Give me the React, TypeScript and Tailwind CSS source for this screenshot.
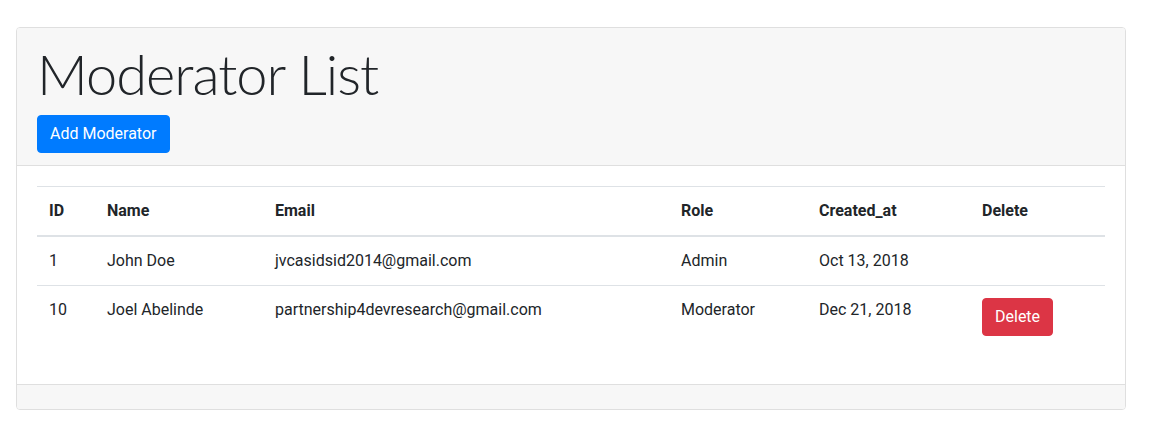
import React from "react";

type Moderator = {
  id: number;
  name: string;
  email: string;
  role: string;
  createdAt: string;
  deletable: boolean;
};

const moderators: Moderator[] = [
  { id: 1, name: "John Doe", email: "jvcasidsid2014@gmail.com", role: "Admin", createdAt: "Oct 13, 2018", deletable: false },
  { id: 10, name: "Joel Abelinde", email: "partnership4devresearch@gmail.com", role: "Moderator", createdAt: "Dec 21, 2018", deletable: true },
];

const columns = [
  { label: "ID", w: "w-[58px]" },
  { label: "Name", w: "w-[168px]" },
  { label: "Email", w: "w-[406px]" },
  { label: "Role", w: "w-[138px]" },
  { label: "Created_at", w: "w-[163px]" },
  { label: "Delete", w: "w-[135px]" },
];

export default function App() {
  return (
    <div className="min-h-[437px] bg-white pt-[27px] pl-4 font-['Roboto',sans-serif] text-[#212529]">
      <div className="w-[1110px] rounded border border-[#dfdfdf] overflow-hidden">
        {/* header */}
        <div className="bg-[#f7f7f7] border-b border-[#dfdfdf] px-5 py-3">
          <h1 className="font-['Lato',sans-serif] font-light text-[56px] leading-[1.2] tracking-[-1px] mb-2">
            Moderator List
          </h1>
          <button className="bg-[#007bff] text-white text-base leading-6 px-3 py-[6px] rounded border border-[#007bff]">
            Add Moderator
          </button>
        </div>

        {/* body */}
        <div className="p-5">
          <table className="w-full border-collapse mb-4 text-base leading-6 table-fixed">
            <thead>
              <tr>
                {columns.map((c) => (
                  <th
                    key={c.label}
                    className={`${c.w} text-left font-bold p-3 border-t border-b-2 border-[#dee2e6]`}
                  >
                    {c.label}
                  </th>
                ))}
              </tr>
            </thead>
            <tbody>
              {moderators.map((m) => (
                <tr key={m.id}>
                  <td className="p-3 align-top border-t border-[#dee2e6]">{m.id}</td>
                  <td className="p-3 align-top border-t border-[#dee2e6]">{m.name}</td>
                  <td className="p-3 align-top border-t border-[#dee2e6]">{m.email}</td>
                  <td className="p-3 align-top border-t border-[#dee2e6]">{m.role}</td>
                  <td className="p-3 align-top border-t border-[#dee2e6]">{m.createdAt}</td>
                  <td className="p-3 align-top border-t border-[#dee2e6]">
                    {m.deletable && (
                      <button className="bg-[#dc3545] text-white text-base leading-6 px-3 py-[6px] rounded border border-[#dc3545]">
                        Delete
                      </button>
                    )}
                  </td>
                </tr>
              ))}
            </tbody>
          </table>
        </div>

        {/* footer */}
        <div className="bg-[#f7f7f7] border-t border-[#dfdfdf] h-[25px]" />
      </div>
    </div>
  );
}
